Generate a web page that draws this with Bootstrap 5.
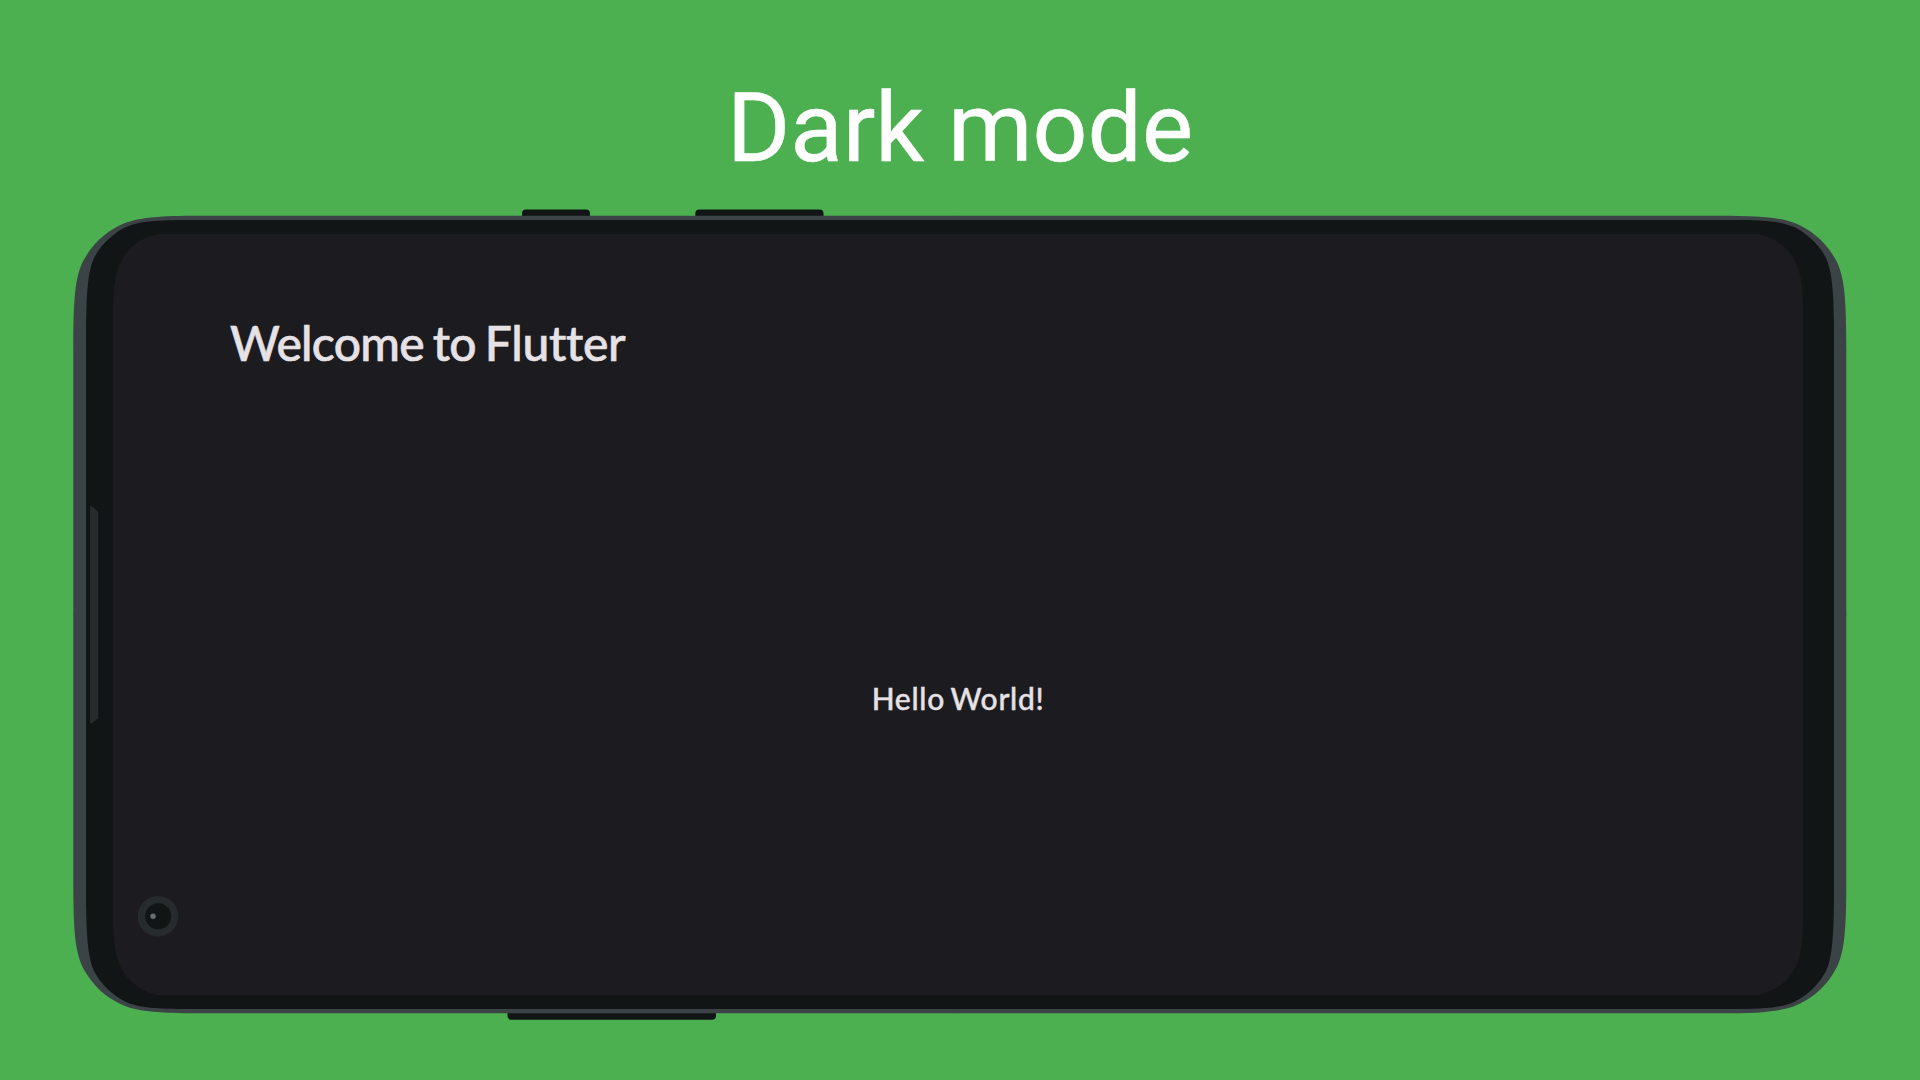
<!DOCTYPE html>
<html lang="en">
<head>
<meta charset="utf-8">
<title>Dark mode</title>
<link href="https://cdn.jsdelivr.net/npm/bootstrap@5.3.0/dist/css/bootstrap.min.css" rel="stylesheet">
<style>
body { background: #4caf50; }
.stage { width: 1920px; height: 1080px; }
.headline { height: 208px; padding-top: 73px; font-family: Roboto, sans-serif; font-size: 96.400px; line-height: 112px; color: #fff; -webkit-text-stroke: .5px #fff; }
.device { height: 814px; }
.frame { z-index: 0; }
.screen { z-index: 1; margin: 26px 117px 0 113px; height: 761px; color: #e6e1e5; font-family: Lato, sans-serif; font-weight: 500; font-variant-ligatures: none; font-feature-settings: "liga" 0, "clig" 0, "dlig" 0, "calt" 0; }
.app-title { padding: 80px 0 0 117px; font-size: 48px; line-height: 58px; height: 166px; letter-spacing: -.72px; word-spacing: -2.500px; -webkit-text-stroke: .6px #e6e1e5; }
.app-title .brand { letter-spacing: -.3px; }
.greeting { font-size: 30px; line-height: 36px; letter-spacing: .7px; word-spacing: -2.400px; -webkit-text-stroke: .4px #e6e1e5; }
</style>
</head>
<body>
<main class="stage d-flex flex-column overflow-hidden">
  <h1 class="headline m-0 fw-normal text-center"><span>Dark mode</span></h1>
  <section class="device position-relative">
    <svg class="frame position-absolute top-0 start-0" width="1920" height="814" viewBox="0 208 1920 814" aria-hidden="true">
      <defs>
        <path id="rim" d="M73.3 350C73.3 292 75.5 272 86.7 255C96 240 110 229 125 223C140 217.5 160 215.7 200 215.7H960V615H73.3Z"/>
        <path id="bezel" d="M86 340C86 290 88 271 94.5 257C102 243 114 233 126 227C140 221.2 155 220 190 220H961V615H86Z"/>
        <path id="glass" d="M113 310C113 286 115 269 124.5 255C132 244.500 143 237.500 156.700 234H960V615H113Z"/>
      </defs>
      <g fill="#111516">
        <path d="M522 217V213.500Q522 209.600 526 209.600H586Q590 209.600 590 213.500V217Z"/>
        <path d="M695.300 217V213.500Q695.300 209.600 699.300 209.600H819.500Q823.500 209.600 823.500 213.500V217Z"/>
        <path d="M507.500 1012V1016Q507.500 1019.700 511.500 1019.700H712Q716 1019.700 716 1016V1012Z"/>
      </g>
      <g fill="#3c4346">
        <use href="#rim"/><use href="#rim" transform="matrix(-1 0 0 1 1919.6 0)"/>
        <use href="#rim" transform="matrix(1 0 0 -1 0 1229)"/><use href="#rim" transform="matrix(-1 0 0 -1 1919.6 1229)"/>
      </g>
      <g fill="#111516">
        <use href="#bezel"/><use href="#bezel" transform="matrix(-1 0 0 1 1920 0)"/>
        <use href="#bezel" transform="matrix(1 0 0 -1 0 1229)"/><use href="#bezel" transform="matrix(-1 0 0 -1 1920 1229)"/>
      </g>
      <g fill="#1c1b1f">
        <use href="#glass"/><use href="#glass" transform="matrix(-1 0 0 1 1916 0)"/>
        <use href="#glass" transform="matrix(1 0 0 -1 0 1229)"/><use href="#glass" transform="matrix(-1 0 0 -1 1916 1229)"/>
      </g>
      <path fill="#262b2d" d="M90 507Q90 505.500 92 506.500L98.300 512V718L92 723.300Q90 724 90 722Z"/>
      <circle cx="158" cy="916.300" r="20.300" fill="#262b2d"/>
      <circle cx="158.200" cy="916.200" r="13" fill="#111516"/>
      <circle cx="153" cy="916.300" r="2.700" fill="#667073"/>
    </svg>
    <div class="screen position-relative d-flex flex-column">
      <header class="app-title"><span>Welcome to <span class="brand">Flutter</span></span></header>
      <div class="flex-grow-1 d-flex align-items-center justify-content-center greeting"><span>Hello World!</span></div>
    </div>
  </section>
</main>
<script src="https://cdn.jsdelivr.net/npm/bootstrap@5.3.0/dist/js/bootstrap.bundle.min.js"></script>
</body>
</html>
